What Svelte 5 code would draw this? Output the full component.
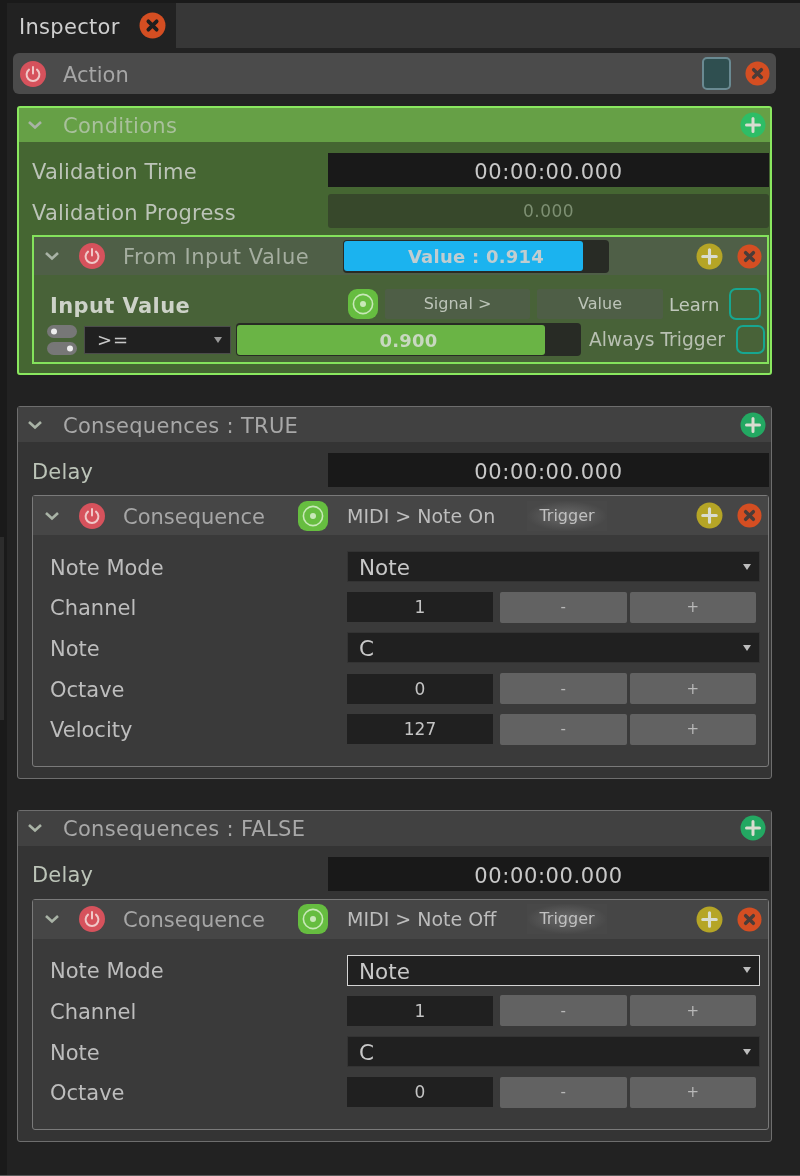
<script>
    const trueRows = [
        { label: "Note Mode", select: "Note" },
        { label: "Channel", value: "1" },
        { label: "Note", select: "C" },
        { label: "Octave", value: "0" },
        { label: "Velocity", value: "127" },
    ];
    const falseRows = [
        { label: "Note Mode", select: "Note", focus: true },
        { label: "Channel", value: "1" },
        { label: "Note", select: "C" },
        { label: "Octave", value: "0" },
    ];
</script>

{#snippet power()}
    <svg class="ico" width="28" height="28" viewBox="0 0 28 28">
        <circle cx="14" cy="14" r="13" fill="#d6525c" />
        <path d="M10 9.6a6.4 6.4 0 1 0 8 0" fill="none" stroke="#f0c8c8" stroke-width="2" stroke-linecap="round" />
        <path d="M14 7v6.5" stroke="#f0c8c8" stroke-width="2" stroke-linecap="round" />
    </svg>
{/snippet}

{#snippet close(size = 25, mark = "#4a3c38")}
    <svg class="ico" width={size} height={size} viewBox="0 0 26 26">
        <circle cx="13" cy="13" r="12.5" fill="#d44e22" />
        <path d="M9 9l8 8M17 9l-8 8" stroke={mark} stroke-width="3.6" stroke-linecap="round" />
    </svg>
{/snippet}

{#snippet plus(color, size = 26)}
    <svg class="ico" width={size} height={size} viewBox="0 0 26 26">
        <circle cx="13" cy="13" r="12.5" fill={color} />
        <path d="M13 6.5v13M6.5 13h13" stroke="#d8dcd0" stroke-width="3" stroke-linecap="round" />
    </svg>
{/snippet}

{#snippet chevron()}
    <svg class="chev" width="16" height="10" viewBox="0 0 16 10">
        <path d="M2 2l6 5.5L14 2" fill="none" stroke="#a9b3a6" stroke-width="2.6" />
    </svg>
{/snippet}

{#snippet target()}
    <svg class="ico" width="30" height="30" viewBox="0 0 30 30">
        <rect width="30" height="30" rx="9" fill="#66bd40" />
        <circle cx="15" cy="15" r="9.6" fill="none" stroke="#c8e8b8" stroke-width="1.6" />
        <circle cx="15" cy="15" r="3" fill="#c8e8b8" />
    </svg>
{/snippet}

{#snippet consequence(action, rows)}
    <div class="sub">
        <div class="sub-head">
            {@render chevron()}
            <span class="power-slot">{@render power()}</span>
            <span class="sub-title name">Consequence</span>
            {@render target()}
            <span class="cmd">MIDI &gt; {action}</span>
            <span class="trigger">Trigger</span>
            <span class="spacer"></span>
            {@render plus("#b5a526", 27)}
            <span class="close-slot">{@render close(25)}</span>
        </div>
        <div class="sub-body">
            {#each rows as row}
                <div class="param">
                    <span class="param-label">{row.label}</span>
                    {#if row.select}
                        <div class="select" class:focus={row.focus}>
                            <span class="select-text">{row.select}</span>
                            <i class="arrow"></i>
                        </div>
                    {:else}
                        <div class="num">{row.value}</div>
                        <div class="stepper">
                            <button>-</button>
                            <button>+</button>
                        </div>
                    {/if}
                </div>
            {/each}
        </div>
    </div>
{/snippet}

{#snippet consequences(title, action, rows)}
    <section class="group">
        <div class="group-head">
            {@render chevron()}
            <span class="group-title">Consequences : {title}</span>
            {@render plus("#23a862", 26)}
        </div>
        <div class="group-body">
            <div class="row">
                <span class="row-label">Delay</span>
                <div class="time">00:00:00.000</div>
            </div>
            {@render consequence(action, rows)}
        </div>
    </section>
{/snippet}

<div class="window">
    <i class="edge"></i>
    <div class="inspector">
        <div class="tabs">
            <div class="tab">
                <span class="tab-name">Inspector</span>
                {@render close(27, "#1e1e1e")}
            </div>
        </div>

        <div class="content">
            <div class="action">
                {@render power()}
                <span class="action-title">Action</span>
                <span class="swatch"></span>
                {@render close(25)}
            </div>

            <section class="group green">
                <div class="group-head">
                    {@render chevron()}
                    <span class="group-title">Conditions</span>
                    {@render plus("#2ebd66", 26)}
                </div>
                <div class="group-body">
                    <div class="row">
                        <span class="row-label">Validation Time</span>
                        <div class="time">00:00:00.000</div>
                    </div>
                    <div class="row">
                        <span class="row-label">Validation Progress</span>
                        <div class="time progress">0.000</div>
                    </div>
                    <div class="sub input">
                        <div class="sub-head">
                            {@render chevron()}
                            <span class="power-slot">{@render power()}</span>
                            <span class="sub-title from">From Input Value</span>
                            <div class="meter">
                                <div class="meter-fill" style="width: {0.914 * 262}px"></div>
                                <span>Value : 0.914</span>
                            </div>
                            <span class="spacer"></span>
                            {@render plus("#b5a526", 27)}
                            <span class="close-slot">{@render close(25)}</span>
                        </div>
                        <div class="input-body">
                            <div class="input-row">
                                <strong>Input Value</strong>
                                {@render target()}
                                <span class="flat signal">Signal &gt;</span>
                                <span class="flat val">Value</span>
                                <span class="learn">Learn</span>
                                <span class="check big"></span>
                            </div>
                            <div class="input-row second">
                                <svg class="ico" width="30" height="30" viewBox="0 0 30 30">
                                    <rect y="0" width="30" height="13" rx="6.5" fill="#777" />
                                    <rect y="17" width="30" height="13" rx="6.5" fill="#777" />
                                    <circle cx="7" cy="6.5" r="3" fill="#eee" />
                                    <circle cx="23" cy="23.5" r="3" fill="#eee" />
                                </svg>
                                <div class="select small">
                                    <span>&gt;=</span>
                                    <i class="arrow"></i>
                                </div>
                                <div class="meter thresh">
                                    <div class="meter-fill" style="width: {0.9 * 342}px"></div>
                                    <span>0.900</span>
                                </div>
                                <span class="always">Always Trigger</span>
                                <span class="check"></span>
                            </div>
                        </div>
                    </div>
                </div>
            </section>

            {@render consequences("TRUE", "Note On", trueRows)}
            {@render consequences("FALSE", "Note Off", falseRows)}
        </div>
    </div>
</div>

<style>
    :global(body) {
        margin: 0;
        background: #1c1c1c;
    }

    .window {
        width: 800px;
        height: 1176px;
        box-sizing: border-box;
        padding: 3px 0 0 7px;
        background: #1a1a1a;
        border-bottom: 1px solid #5a5a5a;
        position: relative;
        overflow: hidden;
        font-family: "DejaVu Sans", sans-serif;
        color: #c4c4c4;
        filter: blur(0.45px);
    }

    .edge {
        position: absolute;
        left: 0;
        top: 537px;
        width: 4px;
        height: 183px;
        background: #2c2c2c;
    }

    .inspector {
        height: 100%;
        background: #222;
    }

    .tabs {
        height: 45px;
        background: #373737;
    }

    .tab {
        width: 169px;
        height: 100%;
        box-sizing: border-box;
        padding-left: 12px;
        display: flex;
        align-items: center;
        background: #222;
        font-size: 21px;
        letter-spacing: 0.3px;
        color: #cfcfcf;
    }

    .tab-name {
        width: 120px;
        padding-top: 3px;
    }

    .content {
        padding: 5px 24px 0 6px;
    }

    .ico,
    .chev {
        flex: none;
        display: block;
    }

    .action {
        height: 41px;
        box-sizing: border-box;
        padding: 0 6px;
        display: flex;
        align-items: center;
        background: #4b4b4b;
        border-radius: 6px;
    }

    .action-title {
        flex: 1;
        margin-left: 16px;
        padding-top: 2px;
        font-size: 21px;
        color: #a6a6a6;
    }

    .swatch {
        width: 29px;
        height: 33px;
        box-sizing: border-box;
        margin-right: 14px;
        background: #2f4f50;
        border: 2px solid #6a8a92;
        border-radius: 5px;
    }

    .group {
        margin: 12px 4px 0;
        padding-bottom: 11px;
        background: #343434;
        border: 1px solid #6e6e6e;
        border-radius: 3px;
    }

    .group + .group {
        margin-top: 31px;
    }

    .group.green {
        background: #456632;
        border: 2px solid #8ae85f;
        padding-bottom: 9px;
    }

    .group-head {
        height: 35px;
        box-sizing: border-box;
        padding: 0 5px 0 9px;
        display: flex;
        align-items: center;
        background: #414141;
    }

    .green .group-head {
        height: 34px;
        padding-left: 8px;
        padding-right: 4px;
        background: #66a046;
    }

    .group-title {
        flex: 1;
        margin-left: 20px;
        padding-top: 2px;
        font-size: 21px;
        letter-spacing: 0.3px;
        color: #a8a8a8;
    }

    .green .group-title {
        color: #a9c09c;
    }

    .group-body {
        padding: 11px 2px 0 14px;
    }

    .green .group-body {
        padding: 11px 1px 0 13px;
    }

    .row {
        height: 34px;
        margin-bottom: 8px;
        display: flex;
        align-items: center;
    }

    .green .row {
        margin-bottom: 7px;
    }

    .row-label {
        width: 296px;
        padding-top: 3px;
        font-size: 21px;
        letter-spacing: 0.2px;
        color: #bcc4b8;
    }

    .time {
        flex: 1;
        height: 34px;
        line-height: 38px;
        text-align: center;
        background: #191919;
        font-size: 21px;
        letter-spacing: 0.6px;
        color: #c8c8c8;
    }

    .time.progress {
        background: #37482b;
        border-radius: 3px;
        font-size: 17px;
        letter-spacing: 0.5px;
        line-height: 34px;
        color: #7d8f72;
    }

    .sub {
        background: #3a3a3a;
        border: 1px solid #7a7a7a;
        border-radius: 3px;
        padding-bottom: 21px;
    }

    .sub.input {
        margin-top: 1px;
        background: #486238;
        border: 2px solid #84e25c;
        border-radius: 0;
        padding-bottom: 6px;
    }

    .sub-head {
        height: 39px;
        box-sizing: border-box;
        padding: 0 6px 0 11px;
        display: flex;
        align-items: center;
        background: #464646;
    }

    .input .sub-head {
        height: 38px;
        padding: 0 5px 0 10px;
        background: #4f5f47;
    }

    .power-slot {
        margin-left: 18px;
    }

    .sub-title {
        margin-left: 17px;
        padding-top: 2px;
        font-size: 21px;
        color: #a6a6a6;
    }

    .sub-title.name {
        width: 175px;
        white-space: nowrap;
    }

    .sub-title.from {
        width: 220px;
        letter-spacing: 0.55px;
        white-space: nowrap;
        color: #a5aea0;
    }

    .cmd {
        margin-left: 19px;
        width: 180px;
        font-size: 19px;
        color: #bdbdbd;
        white-space: nowrap;
    }

    .trigger {
        width: 80px;
        height: 30px;
        line-height: 29px;
        text-align: center;
        font-size: 16px;
        color: #c0c0c0;
        background: radial-gradient(closest-side, #6a6a6a, #484848);
    }

    .spacer {
        flex: 1;
    }

    .close-slot {
        margin-left: 14px;
    }

    .sub-body {
        padding: 16px 8px 0 17px;
    }

    .param {
        height: 31px;
        margin-bottom: 9.7px;
        display: flex;
        align-items: center;
    }

    .param:last-child {
        margin-bottom: 0;
    }

    .param-label {
        width: 297px;
        padding-top: 2px;
        font-size: 21px;
        color: #bdbdbd;
    }

    .select {
        flex: 1;
        height: 31px;
        box-sizing: border-box;
        padding: 0 8px 0 11px;
        display: flex;
        align-items: center;
        justify-content: space-between;
        background: #202020;
        border: 1px solid #333;
        font-size: 21.5px;
        color: #c8c8c8;
    }

    .select-text {
        padding-top: 2px;
    }

    .select.focus {
        border: 1.5px solid #d4d4d4;
    }

    .select.small {
        flex: none;
        width: 147px;
        height: 28px;
        margin-left: 7px;
        padding: 0 8px 0 12px;
        border: 1.5px solid #4b4b4b;
        font-size: 18px;
        letter-spacing: 1px;
    }

    .arrow {
        width: 0;
        height: 0;
        border-left: 4.5px solid transparent;
        border-right: 4.5px solid transparent;
        border-top: 6px solid #bdbdbd;
    }

    .small .arrow {
        border-top-color: #999;
    }

    .num {
        width: 146px;
        height: 30px;
        line-height: 30px;
        text-align: center;
        background: #202020;
        font-size: 17px;
        color: #c4c4c4;
    }

    .stepper {
        margin-left: 7px;
        margin-right: 4px;
        flex: 1;
        display: flex;
        gap: 3px;
    }

    .stepper button {
        flex: 1;
        height: 31px;
        padding: 0;
        border: 0;
        border-radius: 2px;
        background: #626262;
        font-family: inherit;
        font-size: 15px;
        color: #b8b8b8;
    }

    .meter {
        position: relative;
        flex: none;
        width: 266px;
        height: 33px;
        border-radius: 4px;
        background: #282b25;
        font-size: 18px;
        font-weight: 700;
        line-height: 34px;
        letter-spacing: 0.25px;
        text-align: center;
        color: #c0cdd0;
    }

    .meter-fill {
        position: absolute;
        left: 1px;
        top: 1.5px;
        bottom: 1.5px;
        border-radius: 3px;
        background: #1bb3ef;
    }

    .meter span {
        position: absolute;
        left: 0;
        width: 100%;
        white-space: nowrap;
    }

    .input-body {
        padding: 13px 0 0 13px;
    }

    .input-row {
        height: 32px;
        display: flex;
        align-items: center;
    }

    .input-row strong {
        flex: none;
        width: 298px;
        margin-left: 3px;
        padding-top: 3px;
        font-size: 21px;
        letter-spacing: 0.4px;
        color: #cdd2c8;
        white-space: nowrap;
    }

    .flat {
        flex: none;
        height: 30px;
        line-height: 29px;
        text-align: center;
        background: #4e5e46;
        border-radius: 2px;
        font-size: 16px;
        color: #bcc4b8;
    }

    .signal {
        width: 145px;
        margin-left: 7px;
    }

    .val {
        width: 126px;
        margin-left: 7px;
    }

    .learn {
        flex: none;
        width: 60px;
        margin-left: 6px;
        font-size: 18px;
        color: #c0c8bc;
    }

    .check {
        flex: none;
        width: 29px;
        height: 29px;
        box-sizing: border-box;
        border: 2px solid #17a690;
        border-radius: 7px;
    }

    .check.big {
        width: 32px;
        height: 32px;
    }

    .second {
        height: 33px;
        margin-top: 3px;
    }

    .thresh {
        width: 345px;
        margin-left: 5px;
        line-height: 36px;
        color: #c8d8c0;
    }

    .thresh .meter-fill {
        background: #6ab445;
    }

    .always {
        flex: none;
        width: 147px;
        margin-left: 8px;
        font-size: 18.7px;
        color: #b8c0b2;
        white-space: nowrap;
    }
</style>
